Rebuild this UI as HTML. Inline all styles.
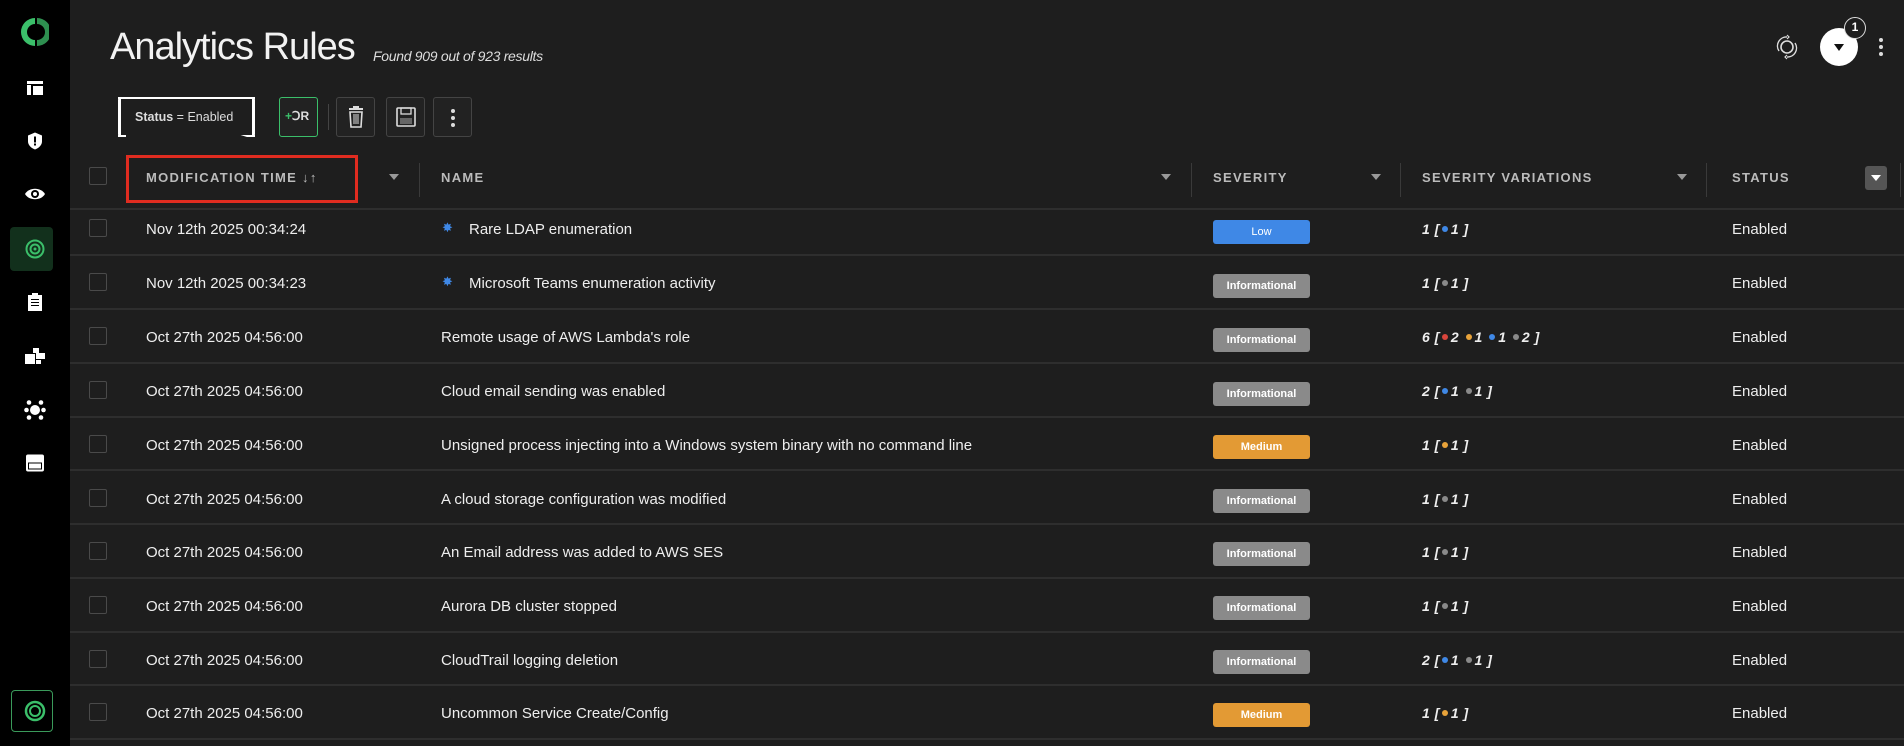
<!DOCTYPE html>
<html><head><meta charset="utf-8"><style>
*{box-sizing:border-box;margin:0;padding:0}
body{width:1904px;height:746px;background:#1e1e1e;font-family:"Liberation Sans",sans-serif;color:#fff;position:relative;overflow:hidden}
.sb{position:absolute;left:0;top:0;width:70px;height:746px;background:#000}
.ic{position:absolute;left:35px;transform:translate(-50%,-50%)}
.abs{position:absolute}
h1{position:absolute;left:110px;top:26px;font-size:38px;font-weight:normal;color:#f2f2f2;letter-spacing:-1px}
.sub{position:absolute;left:373px;top:48px;font-size:14px;font-style:italic;color:#ddd;letter-spacing:-0.3px}
.btn{position:absolute;top:97px;width:39px;height:40px;border:1px solid #444;border-radius:3px;background:#222}
.hd{position:absolute;top:170px;font-size:13px;letter-spacing:1.3px;color:#bbb;font-weight:bold}
.vd{position:absolute;top:163px;width:1px;height:34px;background:#3a3a3a}
.flt{position:absolute;top:174px;width:0;height:0;border-left:5px solid transparent;border-right:5px solid transparent;border-top:6px solid #999}
.hl{position:absolute;left:70px;width:1834px;height:2px;background:#2e2e2e}
.cb{position:absolute;left:89px;width:18px;height:18px;border:1.5px solid #4a4a4a;border-radius:2px}
.t{position:absolute;font-size:15px;color:#eee}
.bd{position:absolute;left:1213px;width:97px;height:24px;border-radius:3px;font-size:11px;font-weight:bold;text-align:center;line-height:24px;color:#fff}
.inf{background:#8a8a8a}.med{background:#e39a34}.low{background:#3f88e6}
.sv{position:absolute;left:1422px;font-size:14px;font-style:italic;font-weight:bold;color:#eee;letter-spacing:0.5px}
.d{display:inline-block;width:6px;height:6px;border-radius:50%;margin:0 3px 2px 2px;vertical-align:middle}
.r{background:#d9453c}.o{background:#e8a33a}.b{background:#3f88e6}.g{background:#8a8a8a}
.st{position:absolute;left:1732px;font-size:15px;color:#eee}
</style></head><body>
<div class="sb">
<svg class="ic" style="top:32px" width="28" height="32" viewBox="0 0 28 32"><path d="M14 2A14 14 0 0 0 14 30V24A8 8 0 0 1 14 8Z" fill="#3bbf6a"/><path d="M16 8A8 8 0 0 1 16 24V30A14 14 0 0 0 16 2Z" fill="#2e8f50"/></svg>
<svg class="ic" style="top:88px" width="16" height="14"><rect x="0" y="0" width="16" height="3" fill="#fff"/><rect x="0" y="4" width="4" height="10" fill="#fff"/><rect x="6" y="5" width="10" height="9" fill="#fff"/></svg>
<svg class="ic" style="top:141px" width="14" height="17" viewBox="0 0 14 17"><path d="M7 0L14 3V9C14 13 10 16 7 17 4 16 0 13 0 9V3Z" fill="#fff"/><rect x="6" y="4" width="2" height="6" fill="#000"/><rect x="6" y="11" width="2" height="2" fill="#000"/></svg>
<svg class="ic" style="top:194px" width="20" height="14" viewBox="0 0 20 14"><path d="M0 7C4 0 16 0 20 7 16 14 4 14 0 7Z" fill="#fff"/><circle cx="10" cy="7" r="4" fill="#000"/><circle cx="10" cy="7" r="2" fill="#fff"/></svg>
<div class="abs" style="left:10px;top:227px;width:43px;height:44px;background:#12301c;border-radius:4px"></div>
<svg class="ic" style="top:249px" width="20" height="20"><circle cx="10" cy="10" r="8.5" fill="none" stroke="#3bbf6a" stroke-width="2"/><circle cx="10" cy="10" r="4.5" fill="none" stroke="#3bbf6a" stroke-width="2"/><circle cx="10" cy="10" r="1.5" fill="#3bbf6a"/></svg>
<svg class="ic" style="top:302px" width="14" height="18"><rect x="0" y="2" width="14" height="16" fill="#fff"/><rect x="4" y="0" width="6" height="4" fill="#fff"/><g fill="#000"><rect x="3" y="6" width="8" height="1"/><rect x="3" y="9" width="8" height="1"/><rect x="3" y="12" width="8" height="1"/></g></svg>
<svg class="ic" style="top:356px" width="20" height="16"><rect x="8" y="0" width="6" height="5" fill="#fff"/><rect x="0" y="6" width="10" height="10" fill="#fff"/><rect x="11" y="5" width="9" height="6" fill="#fff"/><rect x="11" y="12" width="5" height="4" fill="#fff"/></svg>
<svg class="ic" style="top:410px" width="22" height="20"><circle cx="11" cy="10" r="5" fill="#fff"/><g fill="#fff"><circle cx="5" cy="2.5" r="2.3"/><circle cx="17" cy="2.5" r="2.3"/><circle cx="2.5" cy="10" r="2.3"/><circle cx="19.5" cy="10" r="2.3"/><circle cx="5" cy="17.5" r="2.3"/><circle cx="17" cy="17.5" r="2.3"/></g></svg>
<svg class="ic" style="top:463px" width="18" height="17"><rect x="0" y="0" width="18" height="17" rx="2" fill="#fff"/><rect x="2" y="8" width="14" height="7" fill="#000"/><rect x="3" y="9" width="12" height="5" fill="#fff"/></svg>
<div class="abs" style="left:11px;top:690px;width:42px;height:42px;border:1.5px solid #3a9a5a;border-radius:4px"></div>
<svg class="ic" style="top:711px" width="22" height="22"><circle cx="11" cy="11" r="9" fill="none" stroke="#3bbf6a" stroke-width="2.5"/><circle cx="11" cy="11" r="5" fill="none" stroke="#3bbf6a" stroke-width="2"/></svg>
</div>

<h1>Analytics Rules</h1><div class="sub">Found 909 out of 923 results</div>

<svg class="abs" style="left:1774px;top:33px" width="26" height="28" viewBox="0 0 26 28"><circle cx="13" cy="14" r="6" fill="none" stroke="#ddd" stroke-width="1.6"/><path d="M5 18A9 9 0 0 1 13 4M21 10A9 9 0 0 1 13 24" fill="none" stroke="#ddd" stroke-width="1.4"/><path d="M13 2L15 4 13 6M13 22L11 24 13 26" fill="none" stroke="#ddd" stroke-width="1.2"/></svg>
<div class="abs" style="left:1820px;top:28px;width:38px;height:38px;border-radius:50%;background:#fff"></div>
<div class="abs" style="left:1834px;top:44px;border-left:5px solid transparent;border-right:5px solid transparent;border-top:7px solid #111"></div>
<div class="abs" style="left:1844px;top:17px;width:22px;height:22px;border-radius:50%;background:#1e1e1e;border:1.5px solid #ddd;font-size:12px;font-weight:bold;text-align:center;line-height:19px">1</div>
<div class="abs" style="left:1879px;top:38px;width:4px;height:4px;border-radius:50%;background:#ddd;box-shadow:0 7px 0 #ddd,0 14px 0 #ddd"></div>

<div class="abs" style="left:118px;top:97px;width:137px;height:40px;border:3px solid #fff;border-top:none;border-bottom:none;border-radius:3px"></div>
<div class="abs" style="left:118px;top:97px;width:137px;height:40px;border:2px solid #fff;border-left:none;border-right:none;clip-path:polygon(0 0,8px 0,8px 100%,0 100%,0 0,129px 0,137px 0,137px 100%,129px 100%)"></div>
<div class="abs" style="left:135px;top:110px;font-size:12.5px;color:#ddd"><b>Status</b> = Enabled</div>
<div class="btn" style="left:279px;border:1.5px solid #3bbf6a"><span class="abs" style="left:5px;top:11px;font-size:12px;font-weight:bold;color:#ddd"><span style="color:#3bbf6a">+</span>ↃR</span></div>
<div class="abs" style="left:328px;top:104px;width:1px;height:26px;background:#444"></div>
<div class="btn" style="left:336px"><svg class="abs" style="left:10px;top:8px" width="18" height="22"><rect x="2" y="2" width="14" height="2" fill="#ddd"/><rect x="6" y="0" width="6" height="2" fill="#ddd"/><path d="M3 6H15L14 21H4Z" fill="none" stroke="#ddd" stroke-width="1.6"/><path d="M7 8V18M9 8V18M11 8V18" stroke="#ddd"/></svg></div>
<div class="btn" style="left:386px"><svg class="abs" style="left:9px;top:9px" width="20" height="20"><rect x="1" y="1" width="18" height="18" rx="1" fill="none" stroke="#ddd" stroke-width="1.6"/><rect x="5" y="1" width="10" height="6" fill="none" stroke="#ddd" stroke-width="1.3"/><rect x="4" y="11" width="12" height="6" fill="#666"/></svg></div>
<div class="btn" style="left:433px"><div class="abs" style="left:17px;top:11px;width:4px;height:4px;border-radius:50%;background:#ddd;box-shadow:0 7px 0 #ddd,0 14px 0 #ddd"></div></div>

<div class="cb" style="top:167px"></div>
<div class="hd" style="left:146px">MODIFICATION TIME ↓↑</div>
<div class="abs" style="left:126px;top:155px;width:232px;height:48px;border:3px solid #e02c20"></div>
<div class="flt" style="left:389px"></div><div class="vd" style="left:419px"></div>
<div class="hd" style="left:441px">NAME</div>
<div class="flt" style="left:1161px"></div><div class="vd" style="left:1191px"></div>
<div class="hd" style="left:1213px">SEVERITY</div>
<div class="flt" style="left:1371px"></div><div class="vd" style="left:1400px"></div>
<div class="hd" style="left:1422px">SEVERITY VARIATIONS</div>
<div class="flt" style="left:1677px"></div><div class="vd" style="left:1706px"></div>
<div class="hd" style="left:1732px">STATUS</div>
<div class="abs" style="left:1865px;top:166px;width:22px;height:24px;background:#555;border-radius:3px"></div>
<div class="flt" style="left:1871px;border-top-color:#fff;top:175px"></div>
<div class="vd" style="left:1900px"></div>
<div class="hl" style="top:208px"></div>

<div class="hl" style="top:254px"></div><div class="hl" style="top:308px"></div><div class="hl" style="top:362px"></div><div class="hl" style="top:416px"></div><div class="hl" style="top:469px"></div><div class="hl" style="top:523px"></div><div class="hl" style="top:577px"></div><div class="hl" style="top:631px"></div><div class="hl" style="top:684px"></div><div class="hl" style="top:738px"></div>

<div class="cb" style="top:219px"></div><div class="t" style="left:146px;top:221px">Nov 12th 2025 00:34:24</div><div class="t" style="left:442px;top:220px;color:#3f88e6;font-size:13px">✸</div><div class="t" style="left:469px;top:221px">Rare LDAP enumeration</div><div class="bd low" style="top:220px;font-weight:normal">Low</div><div class="sv" style="top:221px">1 [<span class="d b"></span>1 ]</div><div class="st" style="top:221px">Enabled</div>

<div class="cb" style="top:273px"></div><div class="t" style="left:146px;top:275px">Nov 12th 2025 00:34:23</div><div class="t" style="left:442px;top:274px;color:#3f88e6;font-size:13px">✸</div><div class="t" style="left:469px;top:275px">Microsoft Teams enumeration activity</div><div class="bd inf" style="top:274px">Informational</div><div class="sv" style="top:275px">1 [<span class="d g"></span>1 ]</div><div class="st" style="top:275px">Enabled</div>

<div class="cb" style="top:327px"></div><div class="t" style="left:146px;top:329px">Oct 27th 2025 04:56:00</div><div class="t" style="left:441px;top:329px">Remote usage of AWS Lambda's role</div><div class="bd inf" style="top:328px">Informational</div><div class="sv" style="top:329px">6 [<span class="d r"></span>2 <span class="d o"></span>1 <span class="d b"></span>1 <span class="d g"></span>2 ]</div><div class="st" style="top:329px">Enabled</div>

<div class="cb" style="top:381px"></div><div class="t" style="left:146px;top:383px">Oct 27th 2025 04:56:00</div><div class="t" style="left:441px;top:383px">Cloud email sending was enabled</div><div class="bd inf" style="top:382px">Informational</div><div class="sv" style="top:383px">2 [<span class="d b"></span>1 <span class="d g"></span>1 ]</div><div class="st" style="top:383px">Enabled</div>

<div class="cb" style="top:435px"></div><div class="t" style="left:146px;top:437px">Oct 27th 2025 04:56:00</div><div class="t" style="left:441px;top:437px">Unsigned process injecting into a Windows system binary with no command line</div><div class="bd med" style="top:435px">Medium</div><div class="sv" style="top:437px">1 [<span class="d o"></span>1 ]</div><div class="st" style="top:437px">Enabled</div>

<div class="cb" style="top:489px"></div><div class="t" style="left:146px;top:491px">Oct 27th 2025 04:56:00</div><div class="t" style="left:441px;top:491px">A cloud storage configuration was modified</div><div class="bd inf" style="top:489px">Informational</div><div class="sv" style="top:491px">1 [<span class="d g"></span>1 ]</div><div class="st" style="top:491px">Enabled</div>

<div class="cb" style="top:542px"></div><div class="t" style="left:146px;top:544px">Oct 27th 2025 04:56:00</div><div class="t" style="left:441px;top:544px">An Email address was added to AWS SES</div><div class="bd inf" style="top:542px">Informational</div><div class="sv" style="top:544px">1 [<span class="d g"></span>1 ]</div><div class="st" style="top:544px">Enabled</div>

<div class="cb" style="top:596px"></div><div class="t" style="left:146px;top:598px">Oct 27th 2025 04:56:00</div><div class="t" style="left:441px;top:598px">Aurora DB cluster stopped</div><div class="bd inf" style="top:596px">Informational</div><div class="sv" style="top:598px">1 [<span class="d g"></span>1 ]</div><div class="st" style="top:598px">Enabled</div>

<div class="cb" style="top:650px"></div><div class="t" style="left:146px;top:652px">Oct 27th 2025 04:56:00</div><div class="t" style="left:441px;top:652px">CloudTrail logging deletion</div><div class="bd inf" style="top:650px">Informational</div><div class="sv" style="top:652px">2 [<span class="d b"></span>1 <span class="d g"></span>1 ]</div><div class="st" style="top:652px">Enabled</div>

<div class="cb" style="top:703px"></div><div class="t" style="left:146px;top:705px">Oct 27th 2025 04:56:00</div><div class="t" style="left:441px;top:705px">Uncommon Service Create/Config</div><div class="bd med" style="top:703px">Medium</div><div class="sv" style="top:705px">1 [<span class="d o"></span>1 ]</div><div class="st" style="top:705px">Enabled</div>
</body></html>
